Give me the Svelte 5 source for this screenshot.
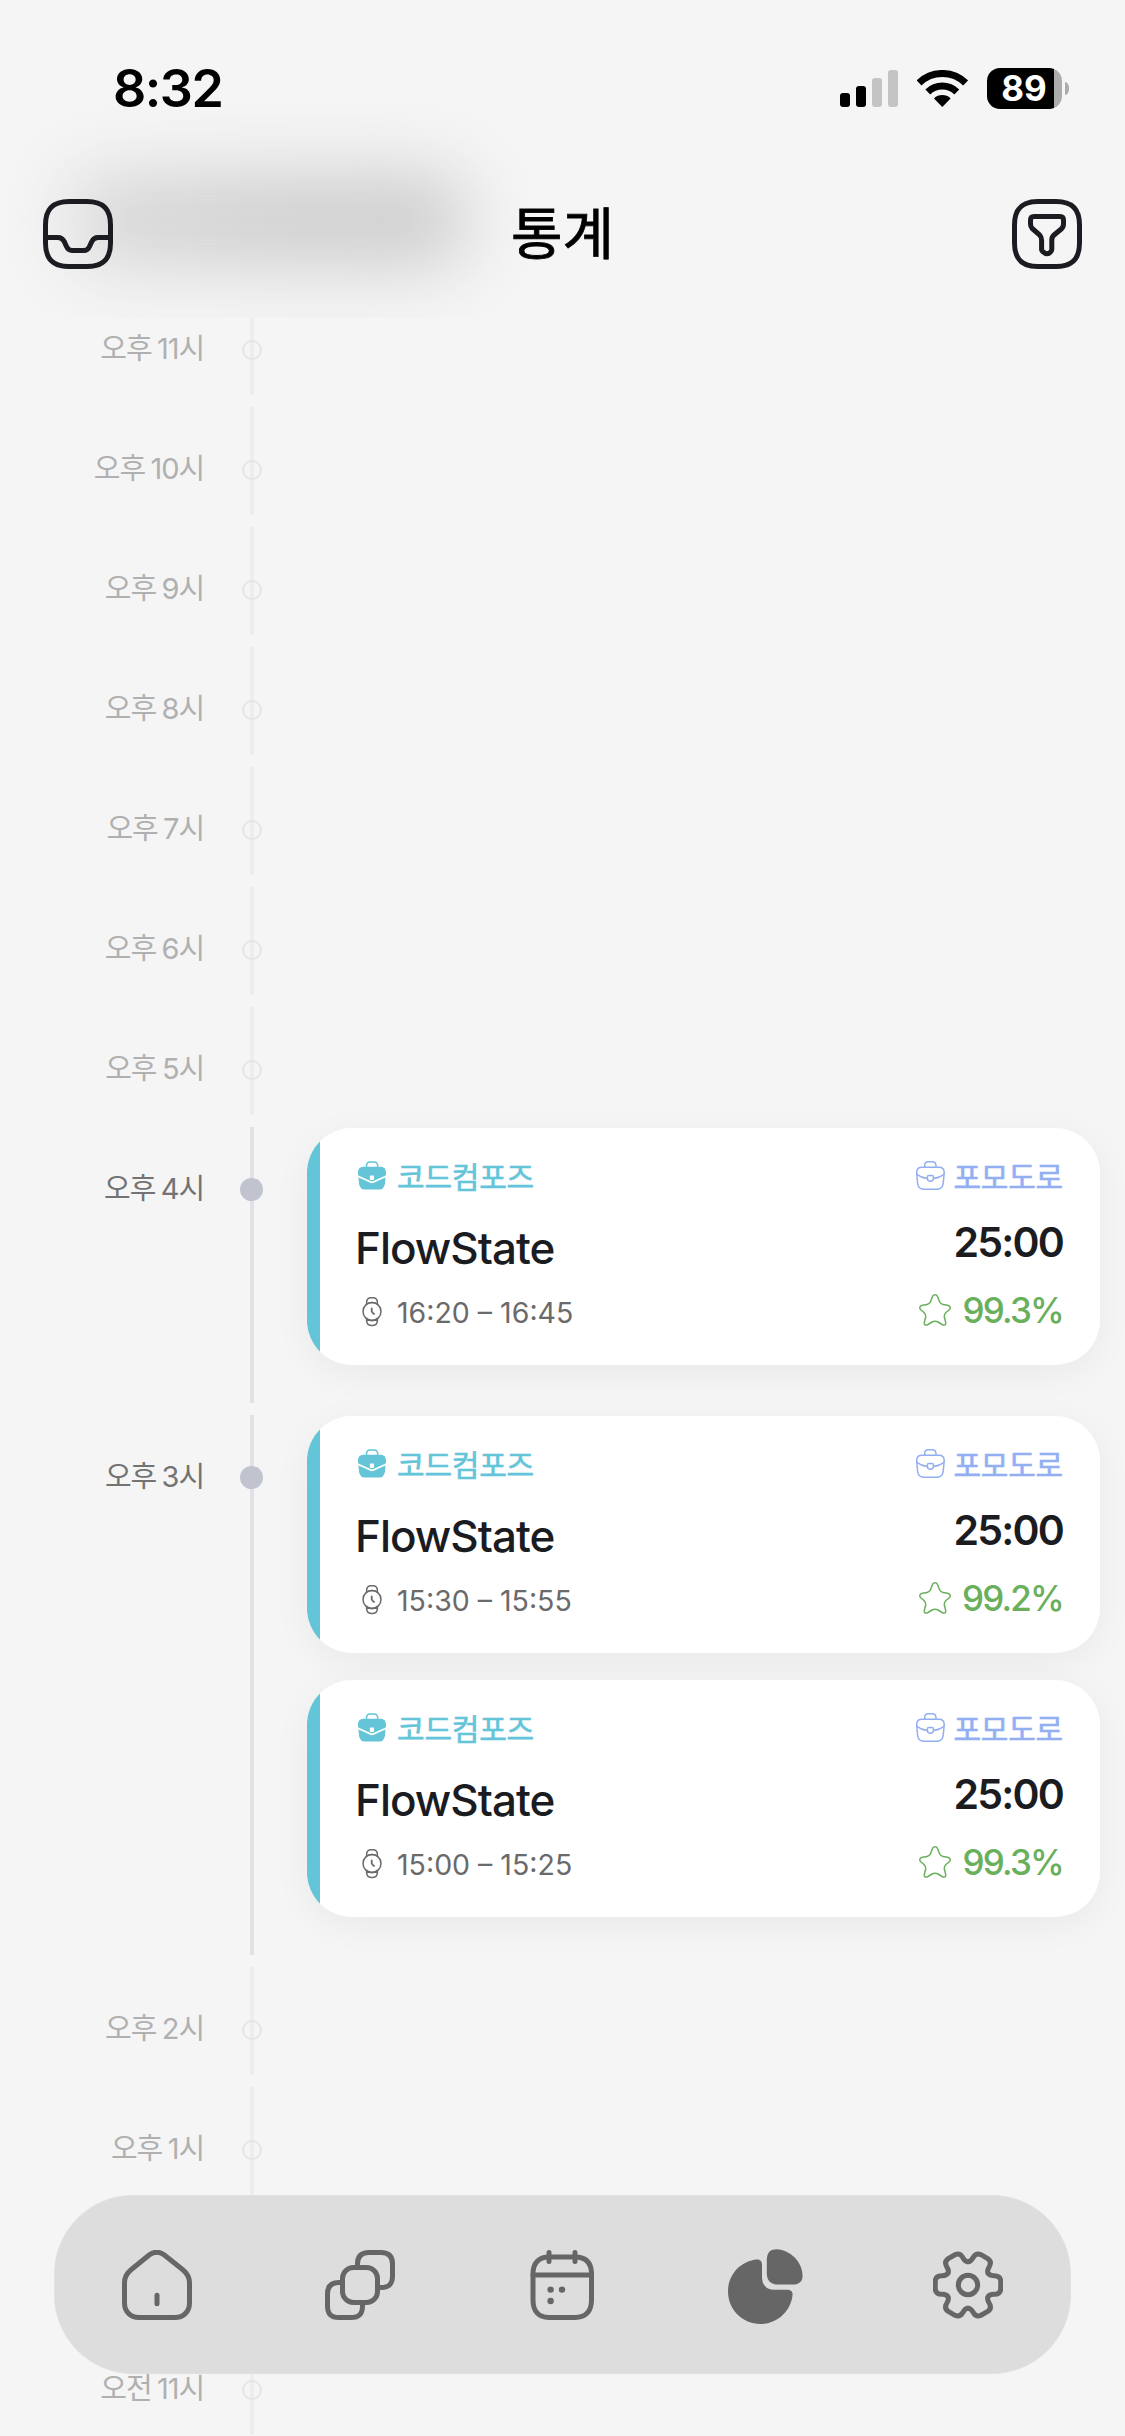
<script>
  const pomodoro = (time, score) => ({
    project: "코드컴포즈",
    title: "FlowState",
    time,
    type: "포모도로",
    duration: "25:00",
    score,
  });

  const hours = [
    { label: "오후 11시", sessions: [] },
    { label: "오후 10시", sessions: [] },
    { label: "오후 9시", sessions: [] },
    { label: "오후 8시", sessions: [] },
    { label: "오후 7시", sessions: [] },
    { label: "오후 6시", sessions: [] },
    { label: "오후 5시", sessions: [] },
    { label: "오후 4시", sessions: [pomodoro("16:20 – 16:45", "99.3%")] },
    {
      label: "오후 3시",
      sessions: [
        pomodoro("15:30 – 15:55", "99.2%"),
        pomodoro("15:00 – 15:25", "99.3%"),
      ],
    },
    { label: "오후 2시", sessions: [] },
    { label: "오후 1시", sessions: [] },
    { label: "오후 12시", sessions: [] },
    { label: "오전 11시", sessions: [] },
  ];

  const teeth = [0, 60, 120, 180, 240, 300];
</script>

<div class="screen">
  <header class="top">
    <div class="haze"></div>

    <div class="status">
      <span class="clock">8:32</span>
      <div class="indicators">
        <div class="signal">
          <i class="bar one"></i>
          <i class="bar two"></i>
          <i class="bar three off"></i>
          <i class="bar four off"></i>
        </div>
        <svg class="wifi" width="51" height="37" viewBox="0 0 51 37">
          <path d="M2 12.9A33.5 33.5 0 0 1 48.6 12.9M10.8 22A20.8 20.8 0 0 1 39.8 22" fill="none" stroke="#000" stroke-width="7" />
          <path d="M25.3 37L17 28.4A12 12 0 0 1 33.6 28.4Z" />
        </svg>
        <div class="battery">89</div>
        <i class="tip"></i>
      </div>
    </div>

    <div class="titlebar">
      <svg class="line" width="70" height="70" viewBox="0 0 70 70">
        <path d="M26 2.5H44C60 2.5 67.5 10 67.5 26V44C67.5 60 60 67.5 44 67.5H26C10 67.5 2.5 60 2.5 44V26C2.5 10 10 2.5 26 2.5Z" />
        <path d="M2.5 38.5H15C18 38.5 20 40 21.3 42.7L23.5 47.5C24.6 50 26 51.5 29 51.5H41C44 51.5 45.4 50 46.5 47.5L48.7 42.7C50 40 52 38.5 55 38.5H67.5" />
      </svg>
      <h1>통계</h1>
      <svg class="line" width="70" height="70" viewBox="0 0 70 70">
        <path d="M26 2.5H44C60 2.5 67.5 10 67.5 26V44C67.5 60 60 67.5 44 67.5H26C10 67.5 2.5 60 2.5 44V26C2.5 10 10 2.5 26 2.5Z" />
        <path d="M22 17.5H48C50.3 17.5 51.5 18.7 51.5 21V25C51.5 27.3 50.8 28.8 49 30.2L42 36C40.3 37.4 39.8 39 39.8 41V50.5C39.8 52 39 52.8 37.8 53.7C36 55 34 55 32.3 53.7C30.8 52.8 29.6 52 29.6 50.5V41C29.6 39 29.2 37.6 27.8 36.2L20.2 29.5C18.8 28 18.5 27 18.5 25V21C18.5 18.7 19.7 17.5 22 17.5Z" />
      </svg>
    </div>
  </header>

  <main class="timeline">
    {#each hours as hour}
      <section class="hour" class:active={hour.sessions.length > 0}>
        <span class="label">{hour.label}</span>
        <div class="rail"><i class="dot"></i></div>
        <div class="sessions">
          {#each hour.sessions as session}
            <article class="card">
              <div class="left">
                <span class="project">
                  <svg width="28" height="29" viewBox="0 0 28 29">
                    <path d="M8.5 6.5V5C8.5 2.2 9.6 .9 12 .9H16C18.6 .9 19.7 2.2 19.7 5V6.5" fill="none" stroke="currentColor" stroke-width="1.5" />
                    <path d="M5.5 5.7H22.5C26 5.7 28 8 28 11.5C28 14 27.4 14.6 27.4 17C27.2 25 26 28.6 20.5 28.6H7.5C2 28.6 .8 25 .6 17C.6 14.6 0 14 0 11.5C0 8 2 5.7 5.5 5.7Z" fill="currentColor" />
                    <path d="M0 15.2L10.5 20Q14 22.6 17.5 20L28 15.2" fill="none" stroke="#fff" stroke-width="1.7" />
                    <rect x="11.8" y="14.6" width="4.2" height="4.4" rx="1" fill="#fff" />
                  </svg>
                  {session.project}
                </span>
                <strong class="title">{session.title}</strong>
                <span class="time">
                  <svg width="28" height="30" viewBox="-4 0 28 30">
                    <g fill="none" stroke="currentColor" stroke-width="1.5">
                      <circle cx="10" cy="14.5" r="9" />
                      <path d="M4.6 7V4.8C5 2 6.6 .8 9 .8H11C13.4 .8 15 2 15.4 4.8V7C12 5 8 5 4.6 7Z" />
                      <path d="M4.6 22V24.2C5 27 6.6 28.4 9 28.4H11C13.4 28.4 15 27 15.4 24.2V22C12 24 8 24 4.6 22Z" />
                      <path d="M9.7 10.8V14C9.7 15.5 11 16.2 12.6 17.4" stroke-width="1.8" />
                    </g>
                  </svg>
                  {session.time}
                </span>
              </div>
              <div class="right">
                <span class="type">
                  <svg width="29" height="29" viewBox="0 0 29 29">
                    <g fill="none" stroke="currentColor" stroke-width="1.5">
                      <path d="M8.7 6.3V5C8.7 2.2 9.8 .8 12.2 .8H16.4C18.9 .8 20 2.2 20 5V6.3" />
                      <path d="M6 6.3H22.8C26.5 6.3 28.2 8 28.2 11.5C28.2 14 27.8 15 27.6 18C27.2 25.5 26 28.3 21 28.3H7.8C2.8 28.3 1.6 25.5 1.2 18C1 15 .7 14 .7 11.5C.7 8 2.4 6.3 6 6.3Z" />
                      <path d="M.9 13.2C3.5 15.4 7.5 17 11.4 17.6M28 13.2C25.4 15.4 21.4 17 17.4 17.6" />
                      <path d="M12.6 14.5H16.2C17.2 14.5 17.4 15 17.4 16V17.5C17.4 19.3 16.2 20.2 14.4 20.2S11.4 19.3 11.4 17.5V16C11.4 15 11.6 14.5 12.6 14.5Z" />
                    </g>
                  </svg>
                  {session.type}
                </span>
                <strong class="duration">{session.duration}</strong>
                <span class="score">
                  <svg width="32" height="32" viewBox="0 0 32 32">
                    <path d="M13.5 2.5C14.5 .2 17.5 .2 18.5 2.5L20.5 7.5C21.3 9.5 22 10.3 24 10.6L28.5 11.3C31.5 11.8 32 14.2 30 16L27 18.5C25.5 20 25 21.3 25.4 23.3L26.6 28C27.3 30.8 25.5 31.8 23 30.5L19 28C17 27 15 27 13 28L9 30.5C6.5 31.8 4.7 30.8 5.4 28L6.6 23.3C7 21.3 6.5 20 5 18.5L2 16C0 14.2 .5 11.8 3.5 11.3L8 10.6C10 10.3 10.7 9.5 11.5 7.5Z" fill="none" stroke="currentColor" stroke-width="1.5" />
                  </svg>
                  {session.score}
                </span>
              </div>
            </article>
          {/each}
        </div>
      </section>
    {/each}
  </main>

  <nav class="tabs">
    <svg class="line" width="70" height="70" viewBox="0 0 70 70">
      <path d="M27.5 4.8C32 1.6 37.5 1.6 42 4.8L60.5 19.5C65.5 23.5 67.5 28 67.5 33V53C67.5 62 61 67.5 53 67.5H17C9 67.5 2.5 62 2.5 53V33C2.5 28 4.5 23.5 9 19.8Z" />
      <path d="M35 45.2V53.7" />
    </svg>
    <svg class="line" width="70" height="70" viewBox="0 0 70 70">
      <rect x="17.5" y="17.5" width="35" height="35" rx="11" />
      <path d="M32.5 17V14C32.5 6 36.5 2.5 44 2.5H56C64 2.5 67.5 6.5 67.5 14V26C67.5 34 64 37.5 56 37.5H53" />
      <path d="M17 32.5H14C6 32.5 2.5 36.5 2.5 44V56C2.5 64 6 67.5 14 67.5H26C34 67.5 37.5 64 37.5 56V53" />
    </svg>
    <svg class="line" width="70" height="70" viewBox="0 0 70 70">
      <path d="M22 7H48C59 7 64.5 13 64.5 24V50C64.5 61 59 67.5 48 67.5H22C11.5 67.5 6 61 6 50V24C6 13 11.5 7 22 7Z" />
      <path d="M6 25H64.5M22 2.5V11.5M48 2.5V11.5" />
      <g class="dots">
        <circle cx="23.6" cy="39.6" r="3.2" />
        <circle cx="35" cy="39.6" r="3.2" />
        <circle cx="23.6" cy="51" r="3.2" />
      </g>
    </svg>
    <svg class="solid" width="75" height="75" viewBox="0 0 75 75">
      <path d="M38.8 11C38.8 3 43 .3 48.5 .3C62.5 1 74.5 13 74.5 27C74.5 32.5 71 35.6 65 35.6H50.5C42 35.6 38.8 31 38.8 24Z" />
      <path d="M28 10.5C31.5 10 34 12 34 15.5V28C34 36 38.5 40.8 46 40.8H59.5C63 40.8 65 43 64.5 46C63 62 49.5 75 32.5 75C14.5 75 0 60.5 0 42.5C0 26 12 12.5 28 10.5Z" />
    </svg>
    <svg class="line" width="70" height="70" viewBox="-35 -35 70 70">
      <circle r="9.7" />
      {#each teeth as angle}
        <path transform="rotate({angle})" d="M0 -23.3C3 -23.3 4 -25.5 5 -27.3C7 -30.8 9.5 -32 13 -30.3L19.7 -26.4C23 -24.2 23.2 -21.5 21.1 -18C20.1 -16.2 18.7 -14.2 20.2 -11.6" />
      {/each}
    </svg>
  </nav>
</div>

<style>
  :global(body) {
    margin: 0;
    background: #f5f5f5;
  }

  .screen {
    position: relative;
    width: 1125px;
    height: 2436px;
    overflow: hidden;
    background: #f5f5f5;
    color: #1b1c21;
    font-family: Inter, "Noto Sans CJK KR", sans-serif;
  }

  .top {
    position: relative;
    z-index: 2;
    height: 318px;
    overflow: hidden;
    background: #f5f5f5;
  }

  .haze {
    position: absolute;
    top: 173px;
    left: 68px;
    width: 400px;
    height: 94px;
    border-radius: 40px;
    background: linear-gradient(90deg, #dadada, #cfcfcf 55%, #cecece);
    filter: blur(34px);
  }

  .status {
    position: relative;
    display: flex;
    justify-content: space-between;
    align-items: center;
    height: 177px;
    padding: 0 56px 0 113px;
    box-sizing: border-box;
    color: #000;
  }

  .clock {
    font-size: 52px;
    font-weight: 600;
    letter-spacing: -1.5px;
  }

  .indicators {
    display: flex;
    align-items: center;
  }

  .signal {
    display: flex;
    align-items: flex-end;
    gap: 6px;
    height: 37px;
    margin-right: 19px;
  }

  .bar {
    width: 10px;
    border-radius: 3px;
    background: #000;
  }

  .one {
    height: 14px;
  }

  .two {
    height: 21px;
  }

  .three {
    height: 29px;
  }

  .four {
    height: 37px;
  }

  .off {
    background: #c4c4c4;
  }

  .wifi {
    margin-right: 19px;
  }

  .battery {
    width: 75px;
    height: 41px;
    border-radius: 13px;
    background: linear-gradient(90deg, #000 67px, #acacac 67px);
    color: #fff;
    font-size: 35px;
    font-weight: 700;
    line-height: 41px;
    text-align: center;
    text-indent: -1px;
  }

  .tip {
    width: 4px;
    height: 13px;
    margin-left: 3px;
    border-radius: 0 4px 4px 0 / 0 6px 6px 0;
    background: #acacac;
  }

  .titlebar {
    position: relative;
    display: flex;
    justify-content: space-between;
    align-items: center;
    height: 113px;
    padding: 0 43px;
  }

  h1 {
    margin: 0;
    color: #000;
    font-size: 56px;
    font-weight: 400;
    line-height: 80px;
    -webkit-text-stroke: 0.8px currentColor;
  }

  .line {
    fill: none;
    stroke: currentColor;
    stroke-width: 5;
    stroke-linecap: round;
    stroke-linejoin: round;
  }

  .timeline {
    margin-top: -31px;
  }

  .hour {
    display: grid;
    grid-template-columns: 204px 96px 1fr;
    min-height: 120px;
  }

  .label {
    margin-top: 41px;
    color: #b0b0b0;
    font-size: 29px;
    line-height: 42px;
    letter-spacing: -1.1px;
    word-spacing: -1.5px;
    text-align: right;
    white-space: nowrap;
  }

  .active .label {
    color: #737373;
  }

  .rail {
    position: relative;
    width: 4px;
    margin: 0 auto 12px;
    background: #ededed;
  }

  .active .rail {
    background: #e1e1e6;
  }

  .dot {
    position: absolute;
    top: 53px;
    left: -8px;
    width: 20px;
    height: 20px;
    box-sizing: border-box;
    border: 2px solid #e5e5e7;
    border-radius: 50%;
  }

  .active .dot {
    top: 51px;
    left: -10px;
    width: 23px;
    height: 23px;
    border: 0;
    background: #c1c4cf;
  }

  .sessions {
    display: flex;
    flex-direction: column;
    gap: 27px;
    padding: 0 25px 0 7px;
  }

  .active .sessions {
    padding-top: 1px;
    padding-bottom: 50px;
  }

  .card {
    display: flex;
    justify-content: space-between;
    height: 237px;
    padding: 0 37px 0 51px;
    box-sizing: border-box;
    border-radius: 45px;
    background: linear-gradient(90deg, #64c4d8 12.5px, #fff 12.5px);
    box-shadow: 0 8px 36px rgba(0, 0, 0, 0.05);
  }

  .left,
  .right {
    display: flex;
    flex-direction: column;
  }

  .right {
    align-items: flex-end;
  }

  .project,
  .type,
  .time,
  .score {
    display: flex;
    align-items: center;
    white-space: nowrap;
  }

  .project,
  .type {
    height: 42px;
    margin-top: 26px;
    font-size: 30px;
    font-weight: 400;
    letter-spacing: -0.2px;
    -webkit-text-stroke: 0.6px currentColor;
  }

  .project {
    gap: 11px;
    color: #64c4d8;
  }

  .type {
    gap: 8px;
    color: #92aff2;
  }

  .title {
    height: 60px;
    margin: 22px 0 0 -3px;
    font-size: 44px;
    font-weight: 500;
    line-height: 60px;
    letter-spacing: -1px;
  }

  .time {
    gap: 11px;
    height: 40px;
    margin-top: 14px;
    color: #6a6a6a;
    font-size: 28.5px;
    letter-spacing: 0;
  }

  .duration {
    height: 50px;
    margin-top: 21px;
    font-size: 41px;
    font-weight: 600;
    line-height: 50px;
    letter-spacing: -1.8px;
  }

  .score {
    gap: 11px;
    height: 44px;
    margin-top: 21px;
    color: #6aaf5c;
    font-size: 35px;
    font-weight: 500;
    letter-spacing: -1.8px;
  }

  .tabs {
    position: absolute;
    z-index: 3;
    top: 2195px;
    left: 54px;
    display: grid;
    grid-template-columns: repeat(5, 202.8px);
    align-items: center;
    justify-content: center;
    justify-items: center;
    width: 1017px;
    height: 179px;
    box-sizing: border-box;
    border: 1px solid #e1e1e1;
    border-radius: 79px;
    background: #ddd;
    color: #666;
  }

  .dots {
    fill: currentColor;
    stroke: none;
  }

  .solid {
    margin-top: 3px;
    fill: currentColor;
  }
</style>
